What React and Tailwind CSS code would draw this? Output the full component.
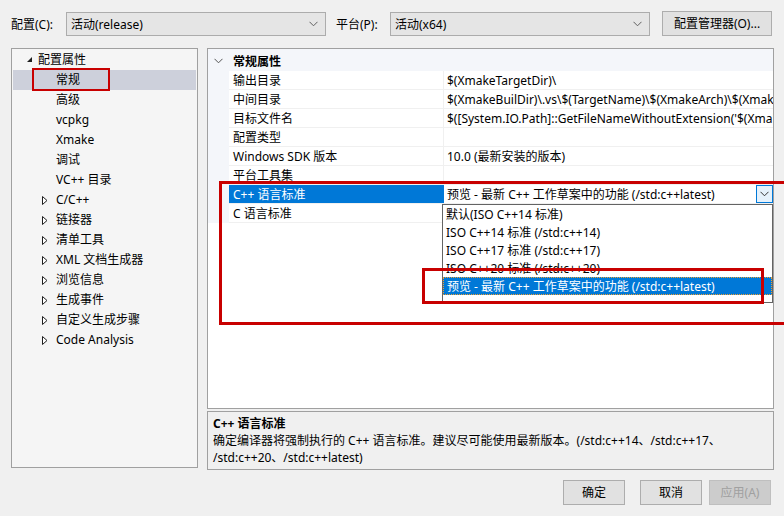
import React from "react";

const Chevron = ({ className = "" }) => (
  <svg width="9" height="6" viewBox="0 0 9 6" className={className}>
    <path d="M0.5 0.8 L4.5 4.8 L8.5 0.8" fill="none" stroke="currentColor" strokeWidth="1" />
  </svg>
);

const TriOpen = () => (
  <svg width="7" height="7" viewBox="0 0 7 7">
    <path d="M6 1 L6 6 L1 6 Z" fill="#1e1e1e" />
  </svg>
);

const TriClosed = () => (
  <svg width="6" height="9" viewBox="0 0 6 9">
    <path d="M0.5 0.5 L5 4.5 L0.5 8.5 Z" fill="#fff" stroke="#1e1e1e" strokeWidth="1" />
  </svg>
);

const treeChildren = ["常规", "高级", "vcpkg", "Xmake", "调试", "VC++ 目录"];
const treeCollapsed = ["C/C++", "链接器", "清单工具", "XML 文档生成器", "浏览信息", "生成事件", "自定义生成步骤", "Code Analysis"];

const rows = [
  ["输出目录", "$(XmakeTargetDir)\\"],
  ["中间目录", "$(XmakeBuilDir)\\.vs\\$(TargetName)\\$(XmakeArch)\\$(XmakeMode)\\"],
  ["目标文件名", "$([System.IO.Path]::GetFileNameWithoutExtension('$(XmakeTargetFilename)'))"],
  ["配置类型", ""],
  ["Windows SDK 版本", "10.0 (最新安装的版本)"],
  ["平台工具集", ""],
];

const options = [
  "默认(ISO C++14 标准)",
  "ISO C++14 标准 (/std:c++14)",
  "ISO C++17 标准 (/std:c++17)",
  "ISO C++20 标准 (/std:c++20)",
];

export default function App() {
  return (
    <div className="relative w-[784px] h-[516px] overflow-hidden bg-[#f0f0f0] text-[12px] text-black font-[family-name:'Noto_Sans','Noto_Sans_CJK_SC',sans-serif]">
      {/* top bar */}
      <div className="flex items-center h-[24px] mt-[12px] pl-[11px]">
        <span className="w-[55px] pt-[2px]">配置(C):</span>
        <div className="w-[260px] h-[24px] border border-[#acacac] bg-[#e5e5e5] flex items-center pl-[4px] pr-[7px]">
          <span className="flex-1 pt-[2px]">活动(release)</span>
          <Chevron className="text-[#606060]" />
        </div>
        <span className="ml-[10px] w-[54px] pt-[2px]">平台(P):</span>
        <div className="w-[260px] h-[24px] border border-[#acacac] bg-[#e5e5e5] flex items-center pl-[4px] pr-[7px]">
          <span className="flex-1 pt-[2px]">活动(x64)</span>
          <Chevron className="text-[#606060]" />
        </div>
        <div className="ml-[12px] w-[110px] h-[25px] -mt-[2px] pt-[1px] border border-[#adadad] bg-[#e1e1e1] flex items-center justify-center">
          配置管理器(O)...
        </div>
      </div>

      {/* main */}
      <div className="flex mt-[12px] pl-[11px]">
        {/* tree */}
        <div className="w-[187px] shrink-0 h-[420px] border border-[#a0a0a0] bg-[#f5f5f5] pt-[1px] px-[1px] leading-[22px]">
          <div className="h-[20px] flex items-center">
            <span className="w-[25px] flex justify-end pr-[5px] -mt-[1px]"><TriOpen /></span>
            <span>配置属性</span>
          </div>
          {treeChildren.map((t, i) => (
            <div key={t} className={`h-[20px] flex items-center pl-[43px] ${i === 0 ? "bg-[#cdd0db]" : ""}`}>
              {t}
            </div>
          ))}
          {treeCollapsed.map((t) => (
            <div key={t} className="h-[20px] flex items-center">
              <span className="w-[43px] flex pl-[29px]"><TriClosed /></span>
              <span>{t}</span>
            </div>
          ))}
        </div>

        {/* right column */}
        <div className="ml-[9px] w-[567px] shrink-0 flex flex-col">
          <div className="h-[361px] border border-[#a0a0a0] bg-white overflow-hidden">
            <div className="h-[22px] bg-[#f4f6fa] flex items-center">
              <span className="w-[21px] shrink-0 flex justify-center text-[#555] pt-[1px]"><Chevron /></span>
              <span className="font-bold pl-[4px] pt-[3px]">常规属性</span>
            </div>
            <div className="flex">
              <div className="w-[21px] shrink-0 bg-[#f4f6fa] h-[152px]" />
              <div className="flex-1 min-w-0">
                {rows.map(([n, v]) => (
                  <div key={n} className="h-[19px] flex border-b border-[#f0f0f0]">
                    <div className="w-[215px] shrink-0 pl-[4px] border-r border-[#f0f0f0] whitespace-nowrap leading-[20px]">{n}</div>
                    <div className="flex-1 min-w-0 pl-[3px] whitespace-nowrap overflow-hidden leading-[20px]">{v}</div>
                  </div>
                ))}
                <div className="h-[19px] flex border-b border-[#f0f0f0]">
                  <div className="w-[215px] shrink-0 pl-[4px] bg-[#0078d7] text-white leading-[20px] whitespace-nowrap">C++ 语言标准</div>
                  <div className="flex-1 min-w-0 flex items-stretch">
                    <div className="flex-1 min-w-0 pl-[3px] leading-[20px] whitespace-nowrap overflow-hidden">预览 - 最新 C++ 工作草案中的功能 (/std:c++latest)</div>
                    <div className="w-[17px] shrink-0 h-[18px] border border-[#0078d7] bg-[#e5f1fb] flex items-center justify-center text-[#333]">
                      <Chevron />
                    </div>
                  </div>
                </div>
                <div className="h-[19px] flex border-b border-[#f0f0f0]">
                  <div className="w-[215px] shrink-0 pl-[4px] border-r border-[#f0f0f0] leading-[20px]">C 语言标准</div>
                  <div className="flex-1" />
                </div>
              </div>
            </div>
          </div>

          <div className="mt-[2px] h-[59px] border border-[#a0a0a0] bg-[#f0f0f0] px-[5px] pt-[3px] leading-[17px]">
            <div className="font-bold">C++ 语言标准</div>
            <div>确定编译器将强制执行的 C++ 语言标准。建议尽可能使用最新版本。(/std:c++14、/std:c++17、</div>
            <div>/std:c++20、/std:c++latest)</div>
          </div>
        </div>
      </div>

      {/* buttons */}
      <div className="flex justify-end pr-[13px] mt-[10px] gap-[15px]">
        <div className="w-[62px] h-[25px] pt-[1px] border border-[#adadad] bg-[#e1e1e1] flex items-center justify-center">确定</div>
        <div className="w-[62px] h-[25px] pt-[1px] border border-[#adadad] bg-[#e1e1e1] flex items-center justify-center">取消</div>
        <div className="-ml-[8px] w-[62px] h-[25px] pt-[1px] border border-[#bfbfbf] bg-[#cccccc] text-[#a0a0a0] flex items-center justify-center">应用(A)</div>
      </div>

      {/* dropdown list overlay */}
      <div className="absolute left-[442px] top-[204px] w-[331px] h-[99px] border border-[#646464] bg-white">
        {options.map((o) => (
          <div key={o} className="h-[18px] pl-[3px] leading-[19px] whitespace-nowrap">{o}</div>
        ))}
        <div className="h-[18px] pl-[3px] leading-[17px] bg-[#0078d7] text-white border border-dotted border-[#f0a030] whitespace-nowrap">
          预览 - 最新 C++ 工作草案中的功能 (/std:c++latest)
        </div>
      </div>

      {/* annotations */}
      <div className="absolute left-[32px] top-[68px] w-[78px] h-[23px] border-[2px] border-[#c80000]" />
      <div className="absolute left-[219px] top-[181px] w-[580px] h-[144px] border-[3px] border-[#c80000]" />
      <div className="absolute left-[422px] top-[268px] w-[342px] h-[36px] border-[3px] border-[#c80000]" />
    </div>
  );
}
